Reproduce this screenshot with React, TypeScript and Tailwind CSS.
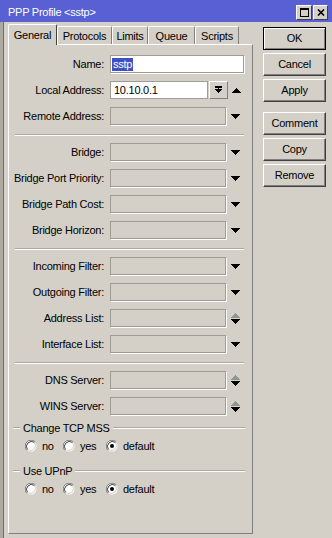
import React from 'react';

const font = "font-['Liberation_Sans',Arial,sans-serif] text-[11px] tracking-[-0.25px] leading-none text-black";

const Down = () => (
  <svg width="9" height="5" viewBox="0 0 9 5" shapeRendering="crispEdges">
    <polygon points="0,0 9,0 4.5,5" fill="#000" />
  </svg>
);

const Up = () => (
  <svg width="9" height="5" viewBox="0 0 9 5" shapeRendering="crispEdges">
    <polygon points="0,5 9,5 4.5,0" fill="#000" />
  </svg>
);

const UpDown = () => (
  <svg width="9" height="11" viewBox="0 0 9 11" shapeRendering="crispEdges">
    <polygon points="0,5 9,5 4.5,0" fill="#8c9a8c" />
    <polygon points="0,6 9,6 4.5,11" fill="#000" />
  </svg>
);

const Radio = ({ checked }: { checked?: boolean }) => (
  <svg width="12" height="12" viewBox="0 0 12 12">
    <circle cx="6" cy="6" r="5.5" fill="#fff" />
    <path d="M1.76 10.24 A6 6 0 0 1 10.24 1.76" stroke="#808080" fill="none" />
    <path d="M2.5 9.5 A5 5 0 0 1 9.5 2.5" stroke="#404040" fill="none" />
    <path d="M9.5 2.5 A5 5 0 0 1 2.5 9.5" stroke="#d4d0c8" fill="none" />
    {checked && <circle cx="6" cy="6" r="2" fill="#000" />}
  </svg>
);

const Field = ({ label, kind = 'down' }: { label: string; kind?: 'down' | 'updown' }) => (
  <div className="flex h-[26px] items-center">
    <div className="w-[95px] text-right">{label}:</div>
    <div className="ml-[6px] h-[18px] w-[116px] border border-[#a09c94] shadow-[1px_1px_0_#fff]" />
    <div className="flex w-[18px] justify-center">{kind === 'down' ? <Down /> : <UpDown />}</div>
  </div>
);

const Sep = () => (
  <div className="h-[10px] pt-[5px] pl-[6px]">
    <div className="w-[229px] border-t border-b border-t-[#aca89f] border-b-white" />
  </div>
);

const Group = ({ title }: { title: string }) => (
  <div>
    <div className="flex h-[18px] w-[236px] items-center">
      <div className="ml-[4px] w-[7px] border-t border-b border-t-[#aca89f] border-b-white" />
      <span className="px-[3px]">{title}</span>
      <div className="flex-1 border-t border-b border-t-[#aca89f] border-b-white" />
    </div>
    <div className="flex h-[18px] items-center pl-[16px]">
      {[
        ['no', 'w-[38px]'],
        ['yes', 'w-[43px]'],
        ['default', 'w-[60px]'],
      ].map(([t, w]) => (
        <div key={t} className={`flex items-center gap-[5px] ${w}`}>
          <Radio checked={t === 'default'} />
          <span>{t}</span>
        </div>
      ))}
    </div>
  </div>
);

const Btn = ({ label, def, className }: { label: string; def?: boolean; className: string }) => (
  <div
    className={`flex h-[23px] w-[63px] items-center justify-center ${className} ${
      def
        ? 'border border-black shadow-[inset_1px_1px_0_#fff,inset_-1px_-1px_0_#808080]'
        : 'border border-t-white border-l-white border-r-[#404040] border-b-[#404040] shadow-[inset_-1px_-1px_0_#808080]'
    }`}
  >
    {label}
  </div>
);

const tabs: [string, string][] = [
  ['Protocols', 'w-[55px]'],
  ['Limits', 'w-[36px]'],
  ['Queue', 'w-[47px]'],
  ['Scripts', 'w-[44px]'],
];

export default function App() {
  return (
    <div className={`flex h-[538px] w-[332px] flex-col overflow-hidden bg-[#d4d0c8] ${font}`}>
      <div className="flex h-[22px] shrink-0 items-center bg-[#5860d4] pl-[8px] pt-[2px] text-white">
        <span className="flex-1">PPP Profile &lt;sstp&gt;</span>
        <div className="flex gap-[1px] pr-[4px]">
          <div className="flex h-[15px] w-[16px] items-center justify-center border border-t-white border-l-white border-r-[#404040] border-b-[#404040] bg-[#d4d0c8]">
            <div className="h-[9px] w-[9px] border border-t-2 border-black" />
          </div>
          <div className="flex h-[15px] w-[15px] items-center justify-center border border-t-white border-l-white border-r-[#404040] border-b-[#404040] bg-[#d4d0c8]">
            <svg width="8" height="7" viewBox="0 0 8 7">
              <path d="M1 0.5 L7 6.5 M7 0.5 L1 6.5" stroke="#000" strokeWidth="1.6" />
            </svg>
          </div>
        </div>
      </div>

      <div className="flex flex-1">
        <div className="w-[4px] border-r border-[#6f6f6f] bg-[#aeaaa2]" />
        <div className="ml-[4px] flex flex-col pt-[2px]">
          <div className="flex h-[20px] items-end">
            <div className="relative z-10 -mb-px flex h-[21px] w-[49px] justify-center rounded-t-[2px] border-t border-l border-r border-t-white border-l-white border-r-[#404040] bg-[#d4d0c8] pt-[5px]">
              General
            </div>
            {tabs.map(([t, w]) => (
              <div
                key={t}
                className={`flex h-[18px] ${w} justify-center rounded-t-[2px] border-t border-l border-r border-t-white border-l-white border-r-[#808080] pt-[4px]`}
              >
                {t}
              </div>
            ))}
          </div>

          <div className="h-[490px] w-[245px] border-t border-l border-r border-b border-t-white border-l-white border-r-[#808080] border-b-[#808080] pt-[6px]">
            <div className="flex h-[26px] items-center">
              <div className="w-[95px] text-right">Name:</div>
              <div className="ml-[6px] flex h-[18px] w-[134px] items-center border border-[#a09c94] bg-white pl-[1px] shadow-[1px_1px_0_#fff]">
                <span className="bg-[#3f51c2] px-[1px] py-[1px] text-white">sstp</span>
              </div>
            </div>
            <div className="flex h-[26px] items-center">
              <div className="w-[95px] text-right">Local Address:</div>
              <div className="ml-[6px] flex h-[18px] w-[98px] items-center border border-[#a09c94] bg-white pl-[3px]">
                10.10.0.1
              </div>
              <div className="ml-[1px] flex h-[18px] w-[19px] items-center justify-center border border-t-white border-l-white border-r-[#808080] border-b-[#808080]">
                <svg width="7" height="8" viewBox="0 0 7 8" shapeRendering="crispEdges">
                  <rect x="0" y="0" width="7" height="2" fill="#000" />
                  <rect x="3" y="2" width="1" height="2" fill="#000" />
                  <polygon points="0,3 7,3 3.5,7" fill="#000" />
                </svg>
              </div>
              <div className="flex w-[16px] justify-center">
                <Up />
              </div>
            </div>
            <Field label="Remote Address" />
            <Sep />
            <Field label="Bridge" />
            <Field label="Bridge Port Priority" />
            <Field label="Bridge Path Cost" />
            <Field label="Bridge Horizon" />
            <Sep />
            <Field label="Incoming Filter" />
            <Field label="Outgoing Filter" />
            <Field label="Address List" kind="updown" />
            <Field label="Interface List" />
            <Sep />
            <Field label="DNS Server" kind="updown" />
            <Field label="WINS Server" kind="updown" />
            <Group title="Change TCP MSS" />
            <div className="mt-[7px]">
              <Group title="Use UPnP" />
            </div>
          </div>
        </div>

        <div className="ml-[10px] flex flex-col">
          <Btn label="OK" def className="mt-[5px]" />
          <Btn label="Cancel" className="mt-[3px]" />
          <Btn label="Apply" className="mt-[3px]" />
          <Btn label="Comment" className="mt-[10px]" />
          <Btn label="Copy" className="mt-[3px]" />
          <Btn label="Remove" className="mt-[3px]" />
        </div>
      </div>
    </div>
  );
}
